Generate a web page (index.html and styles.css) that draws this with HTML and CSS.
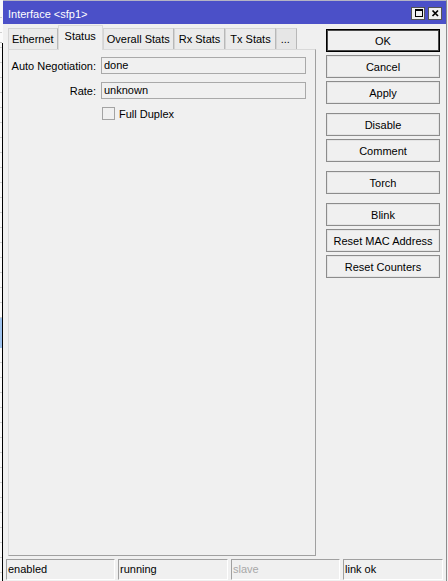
FILE: index.html
```html
<!DOCTYPE html>
<html>
<head>
  <title>Interface &lt;sfp1&gt;</title>
  <link rel="stylesheet" href="styles.css">
</head>
<body>
  <div class="desk"></div>

  <div class="window">
    <div class="titlebar">
      <span class="title">Interface &lt;sfp1&gt;</span>
      <div class="caption">
        <span class="cap">
          <svg width="12" height="11" viewBox="0 0 12 11">
            <rect x="3.5" y="2.5" width="7" height="6" fill="none" stroke="#000"/>
            <rect x="3" y="1" width="8" height="2" fill="#000"/>
          </svg>
        </span>
        <span class="cap">
          <svg width="12" height="11" viewBox="0 0 12 11">
            <path d="M3.5 2.5l5.5 5.5M9 2.5l-5.5 5.5" stroke="#000" stroke-width="1.7" fill="none"/>
          </svg>
        </span>
      </div>
    </div>

    <div class="client">
      <div class="main">
        <div class="tabbox">
          <div class="tabs">
            <div class="tab">Ethernet</div>
            <div class="tab active">Status</div>
            <div class="tab">Overall Stats</div>
            <div class="tab">Rx Stats</div>
            <div class="tab">Tx Stats</div>
            <div class="tab more">...</div>
          </div>
          <div class="panel">
            <div class="form">
              <label>Auto Negotiation:</label>
              <div class="field">done</div>
              <label>Rate:</label>
              <div class="field">unknown</div>
              <span></span>
              <div class="check"><span class="box"></span>Full Duplex</div>
            </div>
          </div>
        </div>

        <div class="actions">
          <div class="group">
            <button class="default">OK</button>
            <button>Cancel</button>
            <button>Apply</button>
          </div>
          <div class="group">
            <button>Disable</button>
            <button>Comment</button>
          </div>
          <div class="group">
            <button>Torch</button>
          </div>
          <div class="group">
            <button>Blink</button>
            <button>Reset MAC Address</button>
            <button>Reset Counters</button>
          </div>
        </div>
      </div>

      <div class="statusbar">
        <div class="cell">enabled</div>
        <div class="cell">running</div>
        <div class="cell dim">slave</div>
        <div class="cell">link ok</div>
      </div>
    </div>
  </div>
</body>
</html>
```

FILE: styles.css
```css
body {
  margin: 0;
  height: 581px;
  display: flex;
  overflow: hidden;
  background: #f0f0f0;
  font-family: "Liberation Sans", Arial, sans-serif;
  font-size: 11px;
  color: #000;
}

/* strip of the list window behind the dialog */
.desk {
  width: 3px;
  flex: none;
  background:
    linear-gradient(#000, #000) 2px 43px / 1px 100% no-repeat,
    linear-gradient(#9fc3ee, #9fc3ee) 0 318px / 2px 30px no-repeat,
    linear-gradient(#bdbdbd, #bdbdbd) 0 42px / 2px 1px no-repeat,
    repeating-linear-gradient(to bottom, transparent 0 14px, #cfcfcf 14px 15px) 0 3px / 2px 100% no-repeat,
    #fafafa;
}

.window {
  width: 443px;
  flex: none;
  display: flex;
  flex-direction: column;
  border-top: 1px solid #b4b4c4;
  border-right: 1px solid #8c8c8c;
  background: #f0f0f0;
}

.titlebar {
  height: 23px;
  display: flex;
  align-items: center;
  padding: 0 4px 0 5px;
  background: #4b50c8;
  color: #fff;
  .title {
    flex: 1;
    padding-top: 3px;
  }
}
.caption {
  display: flex;
  gap: 3px;
  padding-top: 2px;
}
.cap {
  width: 12px;
  height: 11px;
  display: flex;
  border: 1px solid #555;
  background: #f0f0f0;
}

.client {
  flex: 1;
  display: flex;
  flex-direction: column;
}
.main {
  flex: 1;
  display: flex;
  gap: 10px;
  padding: 0 6px 0 5px;
  min-height: 0;
}

.tabbox {
  width: 308px;
  display: flex;
  flex-direction: column;
}
.tabs {
  height: 26px;
  margin-bottom: -1px;
  display: flex;
  align-items: flex-end;
}
.tab {
  height: 21px;
  line-height: 21px;
  padding: 0 3px;
  border: 1px solid #d4d4d4;
  border-bottom: none;
  border-right-color: #b8b8b8;
  background: #ebebeb;
  white-space: nowrap;
}
.tab.active + .tab ~ .tab {
  padding: 0 4px;
}
.tab.active {
  height: 24px;
  padding: 0 6px;
  position: relative;
  z-index: 1;
  background: #f0f0f0;
  border-color: #dadada;
}
.tab.more {
  min-width: 11px;
  background: #e6e6e6;
}
.panel {
  flex: 1;
  border: 1px solid;
  border-color: #d9d9d9 #a0a0a0 #a0a0a0 #d9d9d9;
  background: #f0f0f0;
}

.form {
  display: grid;
  grid-template-columns: 87px 1fr;
  column-gap: 5px;
  row-gap: 8px;
  align-items: center;
  padding: 7px 9px 0 0;
  label {
    text-align: right;
  }
}
.field {
  height: 15px;
  line-height: 15px;
  padding: 0 2px;
  border: 1px solid #a9a9a9;
}
.check {
  display: flex;
  align-items: center;
  gap: 4px;
  height: 13px;
  padding-left: 1px;
  .box {
    width: 11px;
    height: 11px;
    border: 1px solid #a3a3a3;
    background: #f0f0f0;
  }
}

.actions {
  width: 114px;
  padding-top: 5px;
  display: flex;
  flex-direction: column;
  gap: 9px;
}
.group {
  display: flex;
  flex-direction: column;
  gap: 3px;
}
button {
  height: 23px;
  padding: 0;
  font: inherit;
  color: #000;
  background: #f0f0f0;
  border: 1px solid #8c8c8c;
  box-shadow: inset 0 0 0 1px #e4e4e4;
}
button.default {
  border-color: #000;
  box-shadow: inset 0 0 0 1px #4a4a4a;
}

.statusbar {
  display: grid;
  grid-template-columns: 109px 110px 109px 1fr;
  gap: 3px;
  padding: 0 3px;
  margin: 3px 0 1px;
}
.cell {
  height: 19px;
  line-height: 19px;
  padding: 0 1px;
  border: 1px solid;
  border-color: #a0a0a0 #fff #fff #a0a0a0;
}
.cell.dim {
  color: #a8a8a8;
}
```
